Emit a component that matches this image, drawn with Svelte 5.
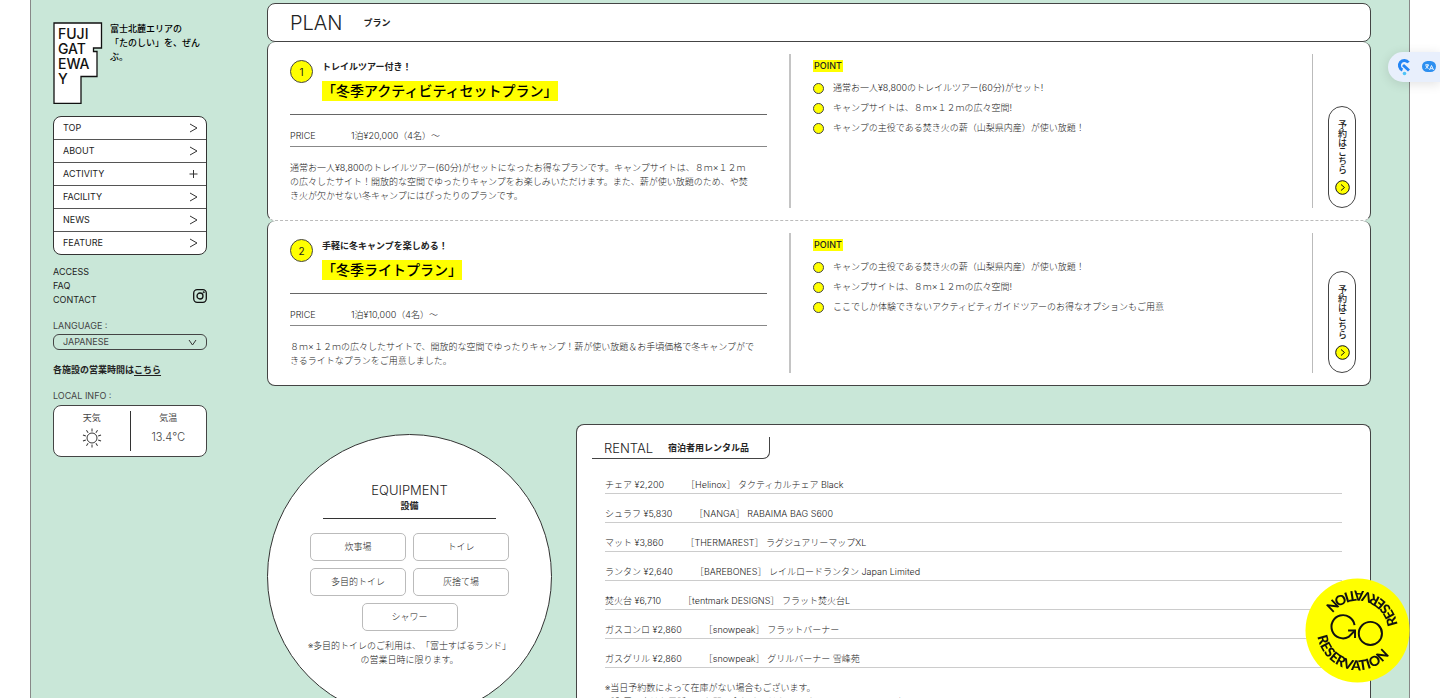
<script lang="ts">
  const nav = [
    { label: 'TOP', open: false },
    { label: 'ABOUT', open: false },
    { label: 'ACTIVITY', open: true },
    { label: 'FACILITY', open: false },
    { label: 'NEWS', open: false },
    { label: 'FEATURE', open: false },
  ];

  const subNav = ['ACCESS', 'FAQ', 'CONTACT'];

  const plans = [
    {
      lead: 'トレイルツアー付き！',
      name: '「冬季アクティビティセットプラン」',
      price: '1泊¥20,000（4名）〜',
      text: '通常お一人¥8,800のトレイルツアー(60分)がセットになったお得なプランです。キャンプサイトは、８ｍ×１２ｍ\nの広々したサイト！開放的な空間でゆったりキャンプをお楽しみいただけます。また、薪が使い放題のため、や焚\nき火が欠かせない冬キャンプにはぴったりのプランです。',
      points: [
        '通常お一人¥8,800のトレイルツアー(60分)がセット!',
        'キャンプサイトは、８ｍ×１２ｍの広々空間!',
        'キャンプの主役である焚き火の薪（山梨県内産）が使い放題！',
      ],
    },
    {
      lead: '手軽に冬キャンプを楽しめる！',
      name: '「冬季ライトプラン」',
      price: '1泊¥10,000（4名）〜',
      text: '８ｍ×１２ｍの広々したサイトで、開放的な空間でゆったりキャンプ！薪が使い放題＆お手頃価格で冬キャンプがで\nきるライトなプランをご用意しました。',
      points: [
        'キャンプの主役である焚き火の薪（山梨県内産）が使い放題！',
        'キャンプサイトは、８ｍ×１２ｍの広々空間!',
        'ここでしか体験できないアクティビティガイドツアーのお得なオプションもご用意',
      ],
    },
  ];

  const equipment = ['炊事場', 'トイレ', '多目的トイレ', '灰捨て場', 'シャワー'];

  const rentals = [
    { item: 'チェア ¥2,200', detail: '［Helinox］ タクティカルチェア Black' },
    { item: 'シュラフ ¥5,830', detail: '［NANGA］ RABAIMA BAG S600' },
    { item: 'マット ¥3,860', detail: '［THERMAREST］ ラグジュアリーマップXL' },
    { item: 'ランタン ¥2,640', detail: '［BAREBONES］ レイルロードランタン Japan Limited' },
    { item: '焚火台 ¥6,710', detail: '［tentmark DESIGNS］ フラット焚火台L' },
    { item: 'ガスコンロ ¥2,860', detail: '［snowpeak］ フラットバーナー' },
    { item: 'ガスグリル ¥2,860', detail: '［snowpeak］ グリルバーナー 雪峰苑' },
  ];

  const rays = [0, 36, 72, 108, 144, 180, 216, 252, 288, 324];
  let language = $state('JAPANESE');
</script>

<div class="page">
  <aside class="sidebar">
    <header class="brand">
      <a href="#top" class="logo" aria-label="FUJI GATEWAY">
        <svg width="50" height="82" viewBox="0 0 50 82">
          <path d="M1 1H48.500V26H40.500V29.500H44V54.500H28V81.500H1Z" fill="#fff" stroke="#111" stroke-width="1.300" />
          <text x="5" y="17">FUJI</text>
          <text x="5" y="32">GAT</text>
          <text x="5" y="47">EWA</text>
          <text x="5" y="62">Y</text>
        </svg>
      </a>
      <p>富士北麓エリアの<br />「たのしい」を、ぜんぶ。</p>
    </header>

    <nav class="menu">
      {#each nav as entry}
        <a href="#{entry.label.toLowerCase()}">
          <span>{entry.label}</span>
          <svg width="9" height="10" viewBox="0 0 9 10">
            <path d={entry.open ? 'M4.500 1V9M.5 5H8.500' : 'M1 1L8 5L1 9'} />
          </svg>
        </a>
      {/each}
    </nav>

    <div class="sub">
      <ul>
        {#each subNav as label}
          <li><a href="#{label.toLowerCase()}">{label}</a></li>
        {/each}
      </ul>
      <a href="#instagram" aria-label="Instagram">
        <svg width="14" height="14" viewBox="0 0 14 14" fill="none" stroke="#111" stroke-width="1.300">
          <rect x=".7" y=".7" width="12.600" height="12.600" rx="3.500" />
          <circle cx="7" cy="7" r="3" />
          <circle cx="10.700" cy="3.300" r=".4" />
        </svg>
      </a>
    </div>

    <label class="caption" for="language">LANGUAGE :</label>
    <div class="select">
      <select id="language" bind:value={language}>
        <option>JAPANESE</option>
        <option>ENGLISH</option>
      </select>
      <svg width="9" height="7" viewBox="0 0 9 7"><path d="M1 1L4.500 6L8 1" /></svg>
    </div>

    <p class="hours">各施設の営業時間は<a href="#hours">こちら</a></p>

    <p class="caption">LOCAL INFO :</p>
    <dl class="weather">
      <div>
        <dt>天気</dt>
        <dd>
          <svg width="20" height="20" viewBox="-10 -10 20 20" role="img" aria-label="晴れ">
            <circle r="5" />
            {#each rays as angle}
              <path d="M0 -6.500V-9.500" transform="rotate({angle})" />
            {/each}
          </svg>
        </dd>
      </div>
      <div>
        <dt>気温</dt>
        <dd>13.4℃</dd>
      </div>
    </dl>
  </aside>

  <main>
    <section class="plans">
      <header class="plans-head">
        <h2>PLAN</h2>
        <span>プラン</span>
      </header>
      {#each plans as plan, i}
        <article class="plan">
          <div class="summary">
            <div class="title">
              <span class="number">{i + 1}</span>
              <div>
                <p class="lead">{plan.lead}</p>
                <h3>{plan.name}</h3>
              </div>
            </div>
            <dl class="price">
              <dt>PRICE</dt>
              <dd>{plan.price}</dd>
            </dl>
            <p class="text">{plan.text}</p>
          </div>
          <div class="points">
            <h4>POINT</h4>
            <ul>
              {#each plan.points as point}
                <li>{point}</li>
              {/each}
            </ul>
          </div>
          <div class="action">
            <a href="#reserve">
              <span>予約はこちら</span>
              <svg width="15" height="15" viewBox="0 0 15 15" fill="none" stroke="#111">
                <circle cx="7.500" cy="7.500" r="6.800" fill="#ff0" />
                <path d="M6 4.500L9.500 7.500L6 10.500" />
              </svg>
            </a>
          </div>
        </article>
      {/each}
    </section>

    <div class="lower">
      <section class="equipment">
        <h2>EQUIPMENT</h2>
        <p class="ja">設備</p>
        <ul>
          {#each equipment as name}
            <li>{name}</li>
          {/each}
        </ul>
        <p class="note">※多目的トイレのご利用は、「富士すばるランド」<br />の営業日時に限ります。</p>
      </section>

      <section class="rental">
        <header>
          <h2>RENTAL</h2>
          <span>宿泊者用レンタル品</span>
        </header>
        <ul>
          {#each rentals as rental}
            <li><span>{rental.item}</span><span>{rental.detail}</span></li>
          {/each}
        </ul>
        <p class="note">※当日予約数によって在庫がない場合もございます。<br />ご入用の方はお電話にてお問い合わせください。（TEL：0555-72-9900）</p>
      </section>
    </div>
  </main>
</div>

<a class="go" href="#reservation" aria-label="GO RESERVATION">
  <svg viewBox="0 0 106 106">
    <defs>
      <path id="arc" d="M12.600 59A41 41 0 0 0 94 51" />
    </defs>
    <circle cx="53" cy="53" r="52.500" fill="#ff0" />
    <text><textPath href="#arc">RESERVATION</textPath></text>
    <text transform="rotate(180 53 53)"><textPath href="#arc">RESERVATION</textPath></text>
    <g fill="none" stroke="#111" stroke-width="2">
      <path d="M50 47.500A11.700 11.700 0 1 0 44 59.500L50.500 53" />
      <path d="M43.500 53H50.500V60.500" />
      <circle cx="66" cy="56" r="11.700" />
    </g>
  </svg>
</a>

<div class="translator">
  <button aria-label="Search">
    <svg width="16" height="18" viewBox="0 0 16 18" fill="none" stroke="#2385f5" stroke-width="3">
      <path d="M12.500 4.500A5 5 0 1 0 6.500 12" />
      <path d="M7 7L13 12.500" />
      <circle cx="8.500" cy="15.500" r="1.800" fill="#4fc3f7" stroke="none" />
    </svg>
  </button>
  <button aria-label="Translate">
    <svg width="14" height="12" viewBox="0 0 14 12">
      <rect width="14" height="11" rx="5.500" fill="#2d8ff0" />
      <path d="M3 4H7M5 3V4M3.500 7.500Q6 6.500 6.300 4M4 5Q5 7 6.500 7.500M7.500 9L9.500 4.500L11.500 9M8.300 7.700H10.700" fill="none" stroke="#fff" stroke-width=".9" />
    </svg>
  </button>
</div>

<style>
  :global(body) {
    margin: 0; background: #fff; color: #222;
    font: 9px/14px Inter, 'Noto Sans CJK JP', sans-serif;
    text-spacing-trim: space-all;
  }
  h2, h3, h4, p, ul, dl, dd { margin: 0; padding: 0; }
  ul { list-style: none; }
  a { color: inherit; text-decoration: none; }
  svg { display: block; }

  .page {
    display: flex; gap: 60px; box-sizing: border-box;
    height: 100vh; overflow: hidden;
    margin: 0 30px; padding: 0 38px 0 22px;
    background: #c9e7d8;
    border: solid #888; border-width: 0 1px;
  }

  .sidebar { width: 154px; flex-shrink: 0; padding-top: 22px; }
  .brand { display: flex; gap: 7px; }
  .brand p { font-weight: 500; color: #000; }
  .logo { flex-shrink: 0; }
  .logo text { font: 500 14px Inter, sans-serif; fill: #111; }

  .menu {
    margin-top: 12px; background: #fff;
    border: 1px solid #333; border-radius: 8px;
  }
  .menu a {
    display: flex; align-items: center; justify-content: space-between;
    height: 22px; padding: 0 8px 0 9px;
  }
  .menu a + a { border-top: 1px solid #555; }
  .menu svg, .select svg { fill: none; stroke: #333; }

  .sub {
    display: flex; align-items: flex-end; justify-content: space-between;
    margin-top: 10px;
  }
  .sub > a { margin-bottom: 4px; }

  .caption { display: block; margin-top: 12px; color: #444; }
  .select { display: flex; align-items: center; margin-top: 1px; border: 1px solid #444; border-radius: 6px; padding-right: 9px; }
  select {
    flex: 1; height: 14px; padding: 0 9px; appearance: none;
    background: none; border: 0; font: 9px/14px Inter, sans-serif; color: #444;
  }
  .hours { margin-top: 13px; font-weight: 700; }
  .hours a { text-decoration: underline; text-underline-offset: 2px; }

  .weather {
    display: flex; margin-top: 2px; padding: 5px 0;
    background: #fff; border: 1px solid #444; border-radius: 8px;
  }
  .weather div { flex: 1; height: 40px; text-align: center; color: #444; }
  .weather div + div { border-left: 1px solid #333; }
  .weather dd { font-size: 11px; line-height: 24px; font-weight: 300; }
  .weather svg { margin: 3px auto 0; fill: none; stroke: #333; }

  main { flex: 1; min-width: 0; padding-top: 3px; }

  .plans-head {
    display: flex; align-items: center; gap: 21px;
    height: 37px; padding: 0 22px;
    background: #fff; border: 1px solid #444; border-radius: 8px;
  }
  .plans-head h2 { font-size: 20px; font-weight: 300; }
  .plans-head span { font-weight: 700; }

  .plan {
    display: flex; padding: 12px 14px 12px 22px;
    background: #fff; border: solid #444; border-width: 0 1px 1px; border-radius: 8px;
  }
  .plan:not(:last-child) { border-bottom: 1px dashed #bbb; }
  .summary { width: 45%; flex-shrink: 0; max-width: 477px; padding: 6px 22px 5px 0; }
  .title { display: flex; gap: 9px; padding-bottom: 13px; border-bottom: 1px solid #666; }
  .number {
    display: flex; align-items: center; justify-content: center;
    width: 21px; height: 21px; background: #ff0;
    border: 1px solid #444; border-radius: 50%; font-size: 10px;
  }
  .lead { font-weight: 700; }
  h3 {
    width: max-content; margin-top: 7px; background: #ff0;
    font-size: 14px; line-height: 20px; font-weight: 500; color: #000;
  }
  .price { display: flex; padding: 14px 0 3px; border-bottom: 1px solid #888; font-weight: 300; }
  .price dt { width: 61px; }
  .text { margin-top: 14px; font-weight: 300; white-space: pre-line; }

  .points { flex: 1; padding: 6px 22px 0; border-left: 2px solid #c4c4c4; }
  h4 { width: max-content; padding: 0 1px; background: #ff0; line-height: 12px; font-weight: 500; }
  .points ul { margin-top: 9px; display: grid; gap: 6px; font-weight: 300; }
  .points li { display: flex; align-items: center; gap: 9px; }
  .points li::before {
    content: ''; width: 9px; height: 9px; background: #ff0;
    border: 1px solid #444; border-radius: 50%;
  }

  .action { display: flex; align-items: flex-end; padding-left: 15px; border-left: 1px solid #bbb; }
  .action a {
    display: flex; flex-direction: column; align-items: center; justify-content: space-between;
    box-sizing: border-box; width: 28px; height: 102px; padding: 13px 0 12px;
    border: 1px solid #444; border-radius: 14px;
  }
  .action span { writing-mode: vertical-rl; font-weight: 500; }

  .lower { display: grid; grid-template-columns: 285px 1fr; gap: 24px; align-items: start; margin-top: 38px; }

  .equipment {
    box-sizing: border-box; aspect-ratio: 1; margin-top: 10px; padding: 46px 35px 0;
    background: #fff; border: 1px solid #333; border-radius: 50%; text-align: center;
  }
  .equipment h2 { font-size: 13px; line-height: 18px; font-weight: 300; }
  .ja { margin: 0 20px; padding-bottom: 5px; border-bottom: 1px solid #333; font-weight: 700; }
  .equipment ul { display: flex; flex-wrap: wrap; justify-content: center; gap: 7px; margin-top: 14px; }
  .equipment li {
    box-sizing: border-box; width: 96px; line-height: 26px; font-weight: 300;
    border: 1px solid #bbb; border-radius: 5px;
  }
  .note { font-weight: 300; }
  .equipment .note { margin-top: 8px; white-space: nowrap; }

  .rental {
    padding: 12px 28px 0 15px; background: #fff;
    border: solid #444; border-width: 1px 1px 0; border-radius: 8px 8px 0 0;
    height: 100vh;
  }
  .rental header {
    display: flex; align-items: center; gap: 15px;
    width: max-content; height: 21px; padding: 0 20px 0 12px;
    border: solid #444; border-width: 0 1px 1px 0; border-radius: 0 0 7px 0;
  }
  .rental header h2 { font-size: 13px; font-weight: 300; }
  .rental header span { font-weight: 700; }
  .rental ul { margin: 18px 0 0 13px; }
  .rental li {
    display: flex; gap: 22px; height: 14px; margin-bottom: 12px; padding: 1px 0;
    border-bottom: 1px solid #ccc; font-weight: 300;
  }
  .rental .note { margin: 13px 0 0 13px; }

  .go { position: fixed; right: 30px; bottom: 15px; width: 105px; }
  .go text { font: 900 14px Lato, sans-serif; fill: #111; }

  .translator {
    position: fixed; top: 52px; right: 0; display: flex; align-items: center; gap: 10px;
    height: 30px; padding: 0 4px 0 8px;
    background: #e8effc; border-radius: 15px 0 0 15px; box-shadow: 0 2px 12px rgba(0, 0, 0, .12);
  }
  .translator button { padding: 0; border: 0; background: none; }
</style>
